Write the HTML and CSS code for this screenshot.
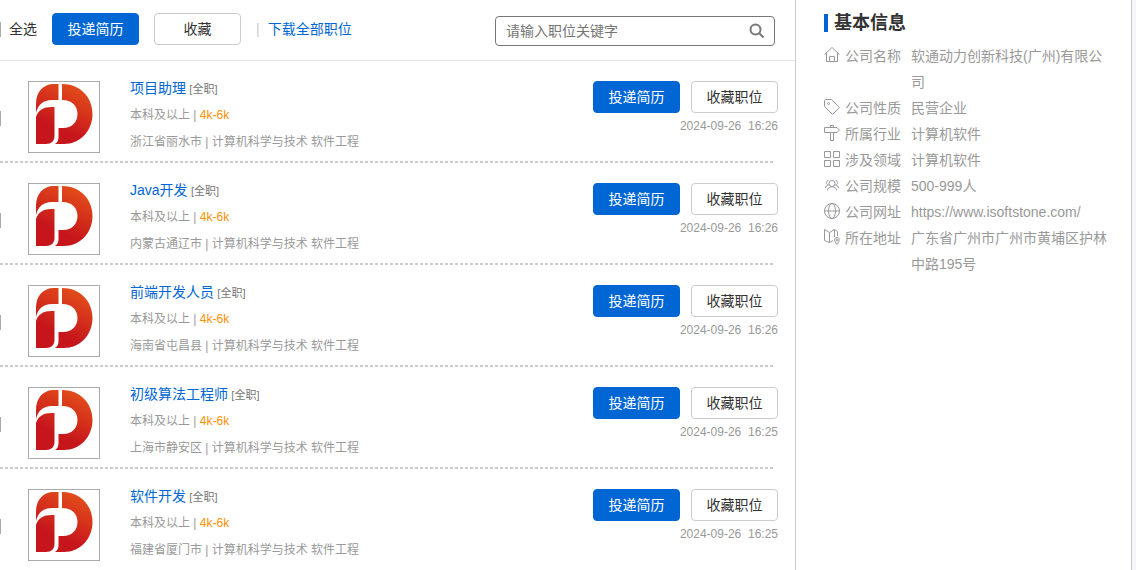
FILE: index.html
```
<!DOCTYPE html>
<html lang="zh-CN">
<head>
    <meta charset="UTF-8">
    <title>招聘职位</title>
    <link rel="stylesheet" href="styles.css">
</head>
<body>
    <svg class="defs" width="0" height="0" aria-hidden="true">
        <defs>
            <linearGradient id="logo-red" x1="60" y1="0" x2="30" y2="62" gradientUnits="userSpaceOnUse">
                <stop offset="0.1" stop-color="#e4501a"/>
                <stop offset="0.8" stop-color="#c6161c"/>
            </linearGradient>
            <symbol id="logo" viewBox="0 0 70 70">
                <g fill="url(#logo-red)">
                    <path d="M7 31V22C7 10 14 2 25 2H29.500V18H23C14 18 9 23 7 31Z"/>
                    <path d="M33 2C51 2 63.500 15 63.500 32S51 62 35 62H26C29 60 29.500 58 29.500 54V46H34C43 46 48.500 40 48.500 32S43 18 33 18Z"/>
                    <path d="M7 62V35C9 28 15 25 22 25H25.500V54C25.500 59 22 62 17 62Z"/>
                </g>
            </symbol>
        </defs>
    </svg>

    <div class="page">
        <main class="jobs">
            <div class="toolbar">
                <input type="checkbox" id="check-all">
                <label for="check-all">全选</label>
                <button class="btn btn-primary">投递简历</button>
                <button class="btn">收藏</button>
                <span class="divider">|</span>
                <a href="#">下载全部职位</a>
                <form class="search">
                    <input type="text" placeholder="请输入职位关键字" aria-label="职位关键字">
                    <button type="button" aria-label="搜索">
                        <svg width="16" height="16" viewBox="0 0 16 16"><circle cx="6.5" cy="6.5" r="5"/><path d="M10 10L14.500 14.500"/></svg>
                    </button>
                </form>
            </div>

            <ul class="job-list">
                <li class="job">
                    <input type="checkbox" aria-label="项目助理">
                    <svg class="logo"><use href="#logo"/></svg>
                    <div class="job-info">
                        <p class="job-title"><a href="#">项目助理</a> <span>[全职]</span></p>
                        <p>本科及以上 | <span class="salary">4k-6k</span></p>
                        <p class="place">浙江省丽水市 | 计算机科学与技术 软件工程</p>
                    </div>
                    <div class="actions">
                        <button class="btn btn-primary">投递简历</button>
                        <button class="btn">收藏职位</button>
                        <time>2024-09-26&nbsp; 16:26</time>
                    </div>
                </li>
                <li class="job">
                    <input type="checkbox" aria-label="Java开发">
                    <svg class="logo"><use href="#logo"/></svg>
                    <div class="job-info">
                        <p class="job-title"><a href="#">Java开发</a> <span>[全职]</span></p>
                        <p>本科及以上 | <span class="salary">4k-6k</span></p>
                        <p class="place">内蒙古通辽市 | 计算机科学与技术 软件工程</p>
                    </div>
                    <div class="actions">
                        <button class="btn btn-primary">投递简历</button>
                        <button class="btn">收藏职位</button>
                        <time>2024-09-26&nbsp; 16:26</time>
                    </div>
                </li>
                <li class="job">
                    <input type="checkbox" aria-label="前端开发人员">
                    <svg class="logo"><use href="#logo"/></svg>
                    <div class="job-info">
                        <p class="job-title"><a href="#">前端开发人员</a> <span>[全职]</span></p>
                        <p>本科及以上 | <span class="salary">4k-6k</span></p>
                        <p class="place">海南省屯昌县 | 计算机科学与技术 软件工程</p>
                    </div>
                    <div class="actions">
                        <button class="btn btn-primary">投递简历</button>
                        <button class="btn">收藏职位</button>
                        <time>2024-09-26&nbsp; 16:26</time>
                    </div>
                </li>
                <li class="job">
                    <input type="checkbox" aria-label="初级算法工程师">
                    <svg class="logo"><use href="#logo"/></svg>
                    <div class="job-info">
                        <p class="job-title"><a href="#">初级算法工程师</a> <span>[全职]</span></p>
                        <p>本科及以上 | <span class="salary">4k-6k</span></p>
                        <p class="place">上海市静安区 | 计算机科学与技术 软件工程</p>
                    </div>
                    <div class="actions">
                        <button class="btn btn-primary">投递简历</button>
                        <button class="btn">收藏职位</button>
                        <time>2024-09-26&nbsp; 16:25</time>
                    </div>
                </li>
                <li class="job">
                    <input type="checkbox" aria-label="软件开发">
                    <svg class="logo"><use href="#logo"/></svg>
                    <div class="job-info">
                        <p class="job-title"><a href="#">软件开发</a> <span>[全职]</span></p>
                        <p>本科及以上 | <span class="salary">4k-6k</span></p>
                        <p class="place">福建省厦门市 | 计算机科学与技术 软件工程</p>
                    </div>
                    <div class="actions">
                        <button class="btn btn-primary">投递简历</button>
                        <button class="btn">收藏职位</button>
                        <time>2024-09-26&nbsp; 16:25</time>
                    </div>
                </li>
            </ul>
        </main>

        <aside class="company">
            <h2>基本信息</h2>
            <dl>
                <div>
                    <dt><svg viewBox="0 0 16 16"><path d="M.5 7.500L8 .5L15.500 7.500 M2.500 6V14.500H13.500V6 M5.500 14.500V9.500H10.500V14.500"/></svg>公司名称</dt>
                    <dd>软通动力创新科技(广州)有限公司</dd>
                </div>
                <div>
                    <dt><svg viewBox="0 0 16 16"><path d="M1.500.5H7.500L15.500 8.500L8.500 15.500L.5 7.500V1.500Z"/><circle cx="4.500" cy="4.500" r="1"/></svg>公司性质</dt>
                    <dd>民营企业</dd>
                </div>
                <div>
                    <dt><svg viewBox="0 0 16 16"><path d="M.5 2.500H13L15.500 5L13 7.500H.5Z M6.500 2.500V.5H9.500V2.500 M6.500 7.500V15.500H9.500V7.500"/></svg>所属行业</dt>
                    <dd>计算机软件</dd>
                </div>
                <div>
                    <dt><svg viewBox="0 0 16 16"><path d="M.5.5H6.500V6.500H.5Z M9.500.5H15.500V6.500H9.500Z M.5 9.500H6.500V15.500H.5Z M9.500 9.500H15.500V15.500H9.500Z"/></svg>涉及领域</dt>
                    <dd>计算机软件</dd>
                </div>
                <div>
                    <dt><svg viewBox="0 0 16 16"><circle cx="8" cy="6.500" r="3"/><path d="M3.500 13.500C3.500 8.500 12.500 8.500 12.500 13.500 M4.500 3.500C2 3.500 2 8 4.500 8C2.500 8 1.500 9.500 1.500 11 M11.500 3.500C14 3.500 14 8 11.500 8C13.500 8 14.500 9.500 14.500 11"/></svg>公司规模</dt>
                    <dd>500-999人</dd>
                </div>
                <div>
                    <dt><svg viewBox="0 0 16 16"><circle cx="8" cy="8" r="7.500"/><ellipse cx="8" cy="8" rx="3.500" ry="7.500"/><path d="M.5 8H15.500"/></svg>公司网址</dt>
                    <dd>https://www.isoftstone.com/</dd>
                </div>
                <div>
                    <dt><svg viewBox="0 0 16 16"><path d="M9 11.500L5.500 13.500L.5 11.500V.5L5.500 3.500L10.500.5L13.500 2.500V7 M5.500 3.500V13.500 M10.500.5V8 M13 15.500C9.500 11.500 10 8.500 13 8.500S16 11.500 13 15.500Z"/><circle cx="13" cy="11" r="1"/></svg>所在地址</dt>
                    <dd>广东省广州市广州市黄埔区护林中路195号</dd>
                </div>
            </dl>
        </aside>
    </div>
</body>
</html>
```
FILE: styles.css
```
* {
    box-sizing: border-box;
}

body {
    margin: 0;
    overflow: hidden;
    background-color: #f5f6fa;
    color: #333;
    font: 14px/20px "Liberation Sans", "Noto Sans CJK SC", sans-serif;
}

p, ul, dl, dd, h2 {
    margin: 0;
    padding: 0;
}

a {
    color: #0066d4;
    text-decoration: none;
}

.defs {
    display: block;
}

.page {
    display: flex;
    min-height: 100vh;
    margin-right: 4px;
    background-color: #fff;
    border-right: 1px solid #ccc;
}

.jobs {
    flex: 1;
    min-width: 0;
    border-right: 1px solid #ccc;
}

input[type="checkbox"] {
    flex: none;
    width: 13px;
    height: 15px;
    margin: 0 0 0 -12px;
    border: 1px solid #aaa;
    background-color: #fff;
    appearance: none;
}

input[type="checkbox"]:checked {
    background-color: #0066d4;
}

.toolbar {
    display: flex;
    align-items: center;
    height: 61px;
    padding: 0 20px 2px 0;
    border-bottom: 1px solid #e6e6e6;
}

.toolbar label {
    margin: 0 15px 0 8px;
}

.toolbar .btn {
    margin-right: 15px;
}

.divider {
    margin-right: 8px;
    color: #ccc;
}

.btn {
    width: 87px;
    height: 32px;
    padding: 0;
    border: 1px solid #ccc;
    border-radius: 4px;
    background-color: #fff;
    color: #333;
    font: inherit;
    cursor: pointer;
}

.btn-primary {
    border-color: #0066d4;
    background-color: #0066d4;
    color: #fff;
}

.search {
    display: flex;
    align-items: center;
    width: 280px;
    height: 30px;
    margin: 4px 0 0 auto;
    padding: 0 9px 0 10px;
    border: 1px solid #767676;
    border-radius: 4px;
}

.search input {
    flex: 1;
    min-width: 0;
    padding: 0;
    border: none;
    outline: none;
    font: inherit;
}

.search input::placeholder {
    color: #757575;
}

.search button {
    height: 16px;
    padding: 0;
    border: none;
    background: none;
}

.search svg {
    display: block;
    fill: none;
    stroke: #777;
    stroke-width: 2;
}

.job-list {
    margin-right: 20px;
    list-style: none;
}

/* short dashes, 3px on and 2px off */
.job {
    display: flex;
    align-items: flex-start;
    min-height: 102px;
    background: repeating-linear-gradient(to right, #ccc 0 3px, transparent 3px 5px) left bottom / 100% 2px no-repeat;
}

.job:last-child {
    background: none;
}

.job input {
    align-self: center;
    margin-top: 12px;
}

.logo {
    flex: none;
    width: 72px;
    height: 72px;
    margin: 20px 30px 0 27px;
    border: 1px solid #aaa;
}

.job-info {
    flex: 1;
    padding-top: 14px;
    color: #999;
    font-size: 12px;
    line-height: 26px;
}

.job-title a {
    font-size: 14px;
}

.job-title span {
    color: #777;
    font-size: 11px;
}

.salary {
    color: #ff9000;
}

.actions {
    display: grid;
    grid-template-columns: auto auto;
    gap: 4px 11px;
    margin: 20px -3px 0 0;
}

.actions time {
    grid-column: 1 / 3;
    color: #999;
    font-size: 12px;
    line-height: 18px;
    text-align: right;
}

.job-info .place {
    line-height: 28px;
}

.company {
    width: 335px;
    padding: 14px 20px 0 28px;
    color: #999;
}

.company h2 {
    padding-left: 6px;
    border-left: 4px solid #0066d4;
    color: #333;
    font-size: 18px;
    line-height: 18px;
}

.company dl {
    margin-top: 11px;
    line-height: 26px;
}

.company dl div {
    display: flex;
}

.company dt {
    display: flex;
    flex: none;
    width: 87px;
}

.company dt svg {
    width: 16px;
    height: 16px;
    margin: 4px 5px 0 0;
    fill: none;
    stroke: #999;
}
```
